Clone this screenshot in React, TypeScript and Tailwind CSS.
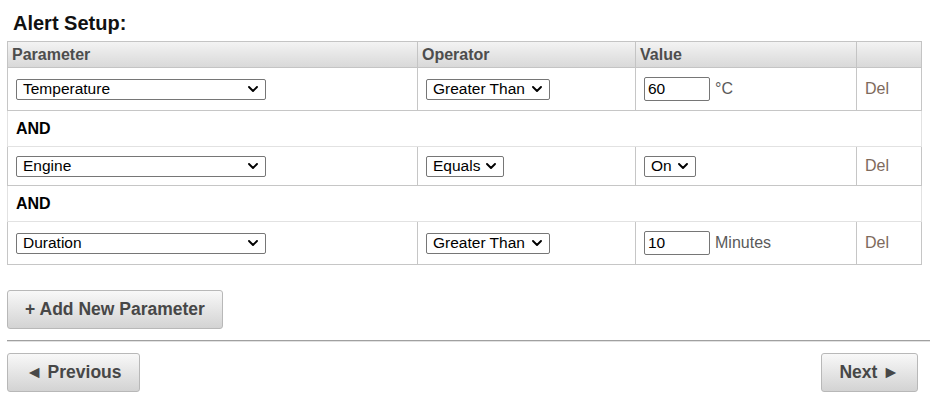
import React from "react";

function Chevron() {
  return (
    <svg className="ml-auto shrink-0" width="10" height="6" viewBox="0 0 10 6" fill="none">
      <path d="M1 1 L5 5 L9 1" stroke="#000" strokeWidth="1.9" strokeLinecap="round" strokeLinejoin="round" />
    </svg>
  );
}

function Sel({ value, w }: { value: string; w: string }) {
  return (
    <div
      role="combobox"
      aria-expanded="false"
      className={`flex h-[21px] ${w} items-center rounded-[2px] border border-[#767676] bg-white pl-[6px] pr-[7px] text-[15.5px] leading-[19px] text-black`}
    >
      <span className="-mt-[1px] whitespace-nowrap">{value}</span>
      <Chevron />
    </div>
  );
}

function Num({ value }: { value: string }) {
  return (
    <input
      defaultValue={value}
      className="h-[24px] w-[66px] rounded-[2px] border border-[#767676] bg-white pb-[1px] pl-[3px] font-['Liberation_Sans',Arial,sans-serif] text-[15.5px] text-black outline-none"
    />
  );
}

const cellBorder = "border-r border-[#c6c6c6]";

function DataRow({
  h,
  param,
  op,
  opW,
  value,
}: {
  h: string;
  param: string;
  op: string;
  opW: string;
  value: React.ReactNode;
}) {
  return (
    <div className={`flex ${h} border-x border-b border-[#c6c6c6]`}>
      <div className={`flex w-[410px] items-center pl-[8px] ${cellBorder}`}>
        <Sel value={param} w="w-[250px]" />
      </div>
      <div className={`flex w-[218px] items-center pl-[8px] ${cellBorder}`}>
        <Sel value={op} w={opW} />
      </div>
      <div className={`flex w-[221px] items-center pl-[8px] ${cellBorder}`}>{value}</div>
      <div className="flex flex-1 items-center pl-[8px] text-[16px] text-[#7e6a5c]">Del</div>
    </div>
  );
}

function AndRow() {
  return (
    <div className="flex h-[36px] items-center border-x border-b border-[#e2e2e2] pl-[8px] text-[16px] font-bold text-black">
      AND
    </div>
  );
}

const btn =
  "flex h-[39px] items-center justify-center rounded-[3px] border border-[#b8b8b8] bg-gradient-to-b from-[#f8f8f8] to-[#d3d3d3] text-[17.5px] font-bold text-[#474747]";

export default function App() {
  return (
    <div className="min-h-[413px] w-[945px] bg-white pl-[7px] pt-[12px] font-['Liberation_Sans',Arial,sans-serif]">
      <div className="mb-[6px] h-[23px] pl-[6px] text-[20px] font-bold leading-[23px] text-[#111]">Alert Setup:</div>

      <div className="w-[915px]">
        <div className="flex h-[27px] border border-[#c4c4c4] bg-gradient-to-b from-[#f3f3f3] to-[#d9d9d9] text-[16px] font-bold text-[#4d4d4d]">
          <div className="flex w-[410px] items-center border-r border-[#c4c4c4] pl-[4px]">Parameter</div>
          <div className="flex w-[218px] items-center border-r border-[#c4c4c4] pl-[4px]">Operator</div>
          <div className="flex w-[221px] items-center border-r border-[#c4c4c4] pl-[4px]">Value</div>
          <div className="flex-1" />
        </div>

        <DataRow
          h="h-[43px]"
          param="Temperature"
          op="Greater Than"
          opW="w-[124px]"
          value={
            <div className="flex items-center gap-[5px]">
              <Num value="60" />
              <span className="text-[16px] text-[#5a5a5a]">°C</span>
            </div>
          }
        />
        <AndRow />
        <DataRow h="h-[39px]" param="Engine" op="Equals" opW="w-[78px]" value={<Sel value="On" w="w-[52px]" />} />
        <AndRow />
        <DataRow
          h="h-[43px]"
          param="Duration"
          op="Greater Than"
          opW="w-[124px]"
          value={
            <div className="flex items-center gap-[5px]">
              <Num value="10" />
              <span className="text-[16px] text-[#5a5a5a]">Minutes</span>
            </div>
          }
        />
      </div>

      <button className={`${btn} mt-[25px] w-[216px]`}>+ Add New Parameter</button>

      <div className="mt-[11px] w-[923px] border-t border-b border-t-[#a0a0a0] border-b-[#e2e2e2]" />

      <div className="mt-[11px] flex w-[911px] justify-between">
        <button className={`${btn} w-[133px]`}>◄ Previous</button>
        <button className={`${btn} w-[97px]`}>Next ►</button>
      </div>
    </div>
  );
}
